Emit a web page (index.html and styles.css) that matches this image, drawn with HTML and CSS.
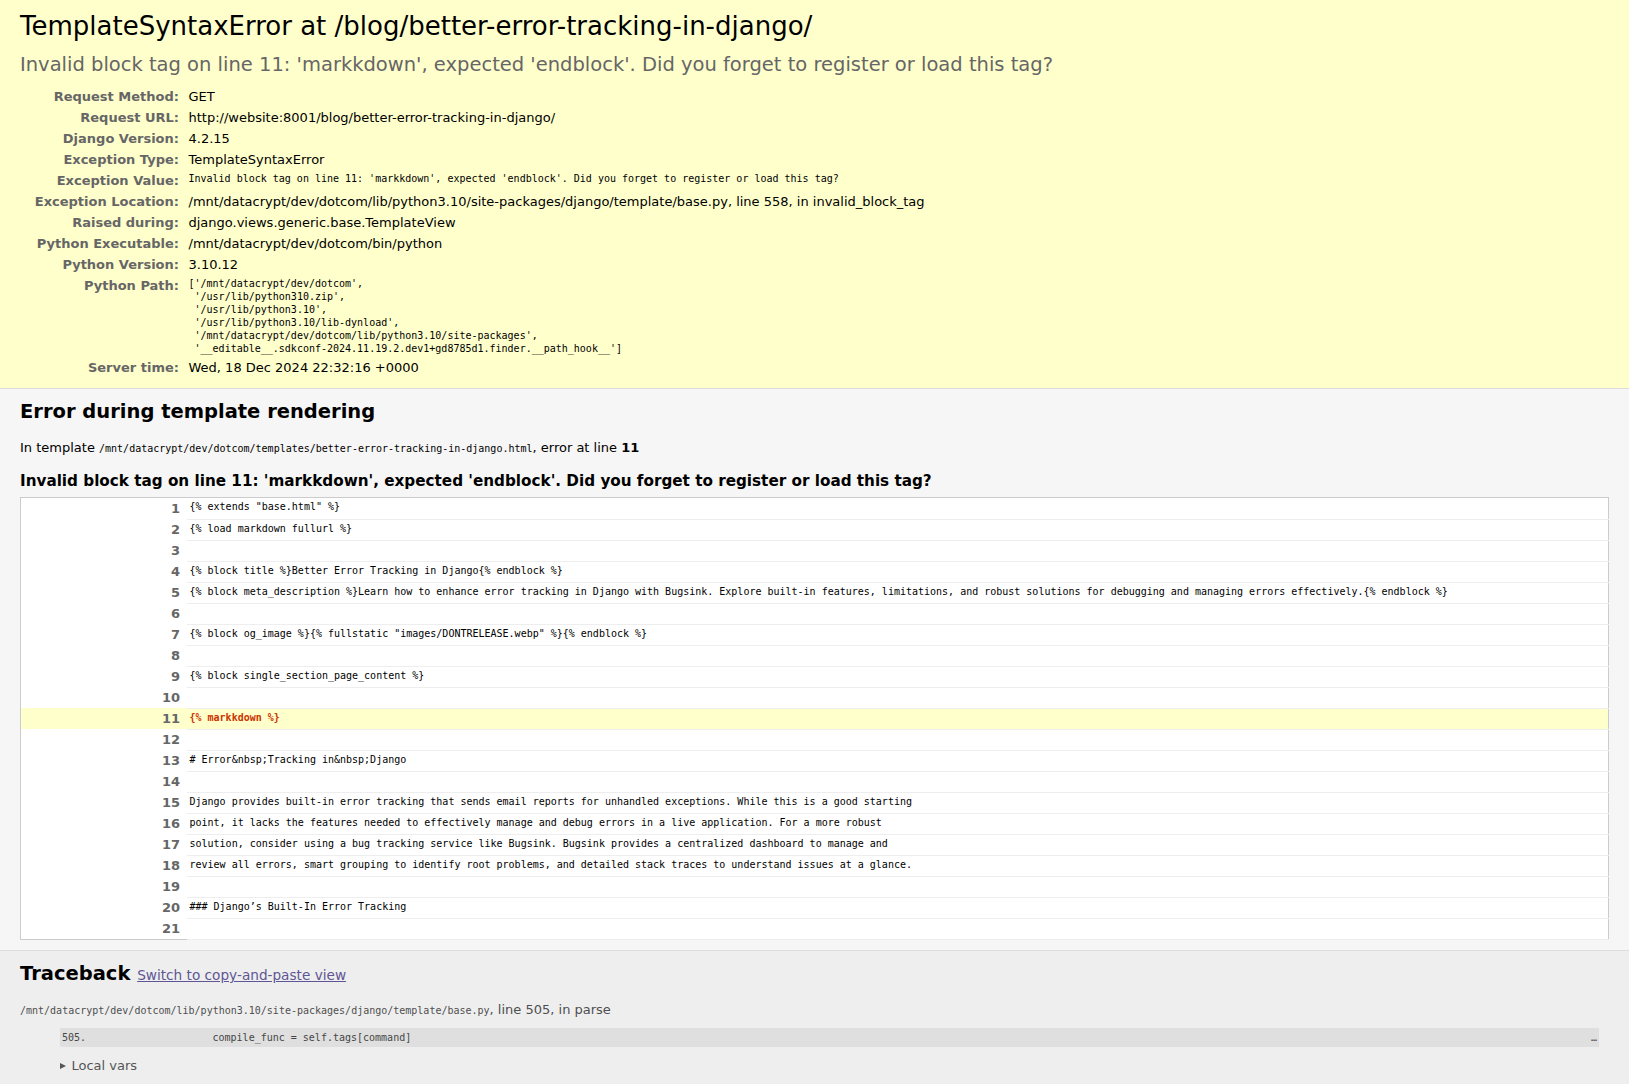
FILE: index.html
```html
<!DOCTYPE html>
<html lang="en">
<head>
<meta charset="utf-8">
<title>TemplateSyntaxError at /blog/better-error-tracking-in-django/</title>
<link rel="stylesheet" href="styles.css">
</head>
<body>
<div class="panel summary">
<h1 class="title">TemplateSyntaxError at /blog/better-error-tracking-in-django/</h1>
<pre class="exception-value">Invalid block tag on line 11: 'markkdown', expected 'endblock'. Did you forget to register or load this tag?</pre>
<table class="meta">
<tbody>
<tr><th>Request Method:</th><td>GET</td></tr>
<tr><th>Request URL:</th><td>http://website:8001/blog/better-error-tracking-in-django/</td></tr>
<tr><th>Django Version:</th><td>4.2.15</td></tr>
<tr><th>Exception Type:</th><td>TemplateSyntaxError</td></tr>
<tr><th>Exception Value:</th><td><pre class="mono">Invalid block tag on line 11: 'markkdown', expected 'endblock'. Did you forget to register or load this tag?</pre></td></tr>
<tr><th>Exception Location:</th><td><span>/mnt/datacrypt/dev/dotcom/lib/python3.10/site-packages/django/template/base.py</span>, line 558, in invalid_block_tag</td></tr>
<tr><th>Raised during:</th><td>django.views.generic.base.TemplateView</td></tr>
<tr><th>Python Executable:</th><td>/mnt/datacrypt/dev/dotcom/bin/python</td></tr>
<tr><th>Python Version:</th><td>3.10.12</td></tr>
<tr><th>Python Path:</th><td><pre class="mono">['/mnt/datacrypt/dev/dotcom',
 '/usr/lib/python310.zip',
 '/usr/lib/python3.10',
 '/usr/lib/python3.10/lib-dynload',
 '/mnt/datacrypt/dev/dotcom/lib/python3.10/site-packages',
 '__editable__.sdkconf-2024.11.19.2.dev1+gd8785d1.finder.__path_hook__']</pre></td></tr>
<tr><th>Server time:</th><td>Wed, 18 Dec 2024 22:32:16 +0000</td></tr>
</tbody>
</table>
</div>
<div class="panel template">
<h2 class="heading">Error during template rendering</h2>
<p class="template-where">In template <code class="mono">/mnt/datacrypt/dev/dotcom/templates/better-error-tracking-in-django.html</code>, error at line <strong>11</strong></p>
<h3 class="subheading">Invalid block tag on line 11: 'markkdown', expected 'endblock'. Did you forget to register or load this tag?</h3>
<table class="source">
<tbody>
<tr><th>1</th><td>{% extends "base.html" %}</td></tr>
<tr><th>2</th><td>{% load markdown fullurl %}</td></tr>
<tr><th>3</th><td></td></tr>
<tr><th>4</th><td>{% block title %}Better Error Tracking in Django{% endblock %}</td></tr>
<tr><th>5</th><td>{% block meta_description %}Learn how to enhance error tracking in Django with Bugsink. Explore built-in features, limitations, and robust solutions for debugging and managing errors effectively.{% endblock %}</td></tr>
<tr><th>6</th><td></td></tr>
<tr><th>7</th><td>{% block og_image %}{% fullstatic "images/DONTRELEASE.webp" %}{% endblock %}</td></tr>
<tr><th>8</th><td></td></tr>
<tr><th>9</th><td>{% block single_section_page_content %}</td></tr>
<tr><th>10</th><td></td></tr>
<tr class="error-line"><th>11</th><td><span class="specific">{% markkdown %}</span></td></tr>
<tr><th>12</th><td></td></tr>
<tr><th>13</th><td># Error&amp;nbsp;Tracking in&amp;nbsp;Django</td></tr>
<tr><th>14</th><td></td></tr>
<tr><th>15</th><td>Django provides built-in error tracking that sends email reports for unhandled exceptions. While this is a good starting</td></tr>
<tr><th>16</th><td>point, it lacks the features needed to effectively manage and debug errors in a live application. For a more robust</td></tr>
<tr><th>17</th><td>solution, consider using a bug tracking service like Bugsink. Bugsink provides a centralized dashboard to manage and</td></tr>
<tr><th>18</th><td>review all errors, smart grouping to identify root problems, and detailed stack traces to understand issues at a glance.</td></tr>
<tr><th>19</th><td></td></tr>
<tr><th>20</th><td>### Django’s Built-In Error Tracking</td></tr>
<tr><th>21</th><td></td></tr>
</tbody>
</table>
</div>
<div class="panel traceback">
<h2 class="heading">Traceback <span class="commands"><a href="#">Switch to copy-and-paste view</a></span></h2>
<ul class="frames">
<li class="frame">
<code class="mono">/mnt/datacrypt/dev/dotcom/lib/python3.10/site-packages/django/template/base.py</code>, line 505, in parse
<div class="context">
<ol class="context-line" start="505"><li><pre class="inline">                    compile_func = self.tags[command]</pre> <span class="dots">…</span></li></ol>
</div>
<details class="vars-toggle"><summary class="commands-summary">Local vars</summary></details>
</li>
</ul>
</div>
</body>
</html>
```
FILE: styles.css
```css
html, body, h1, h2, h3, p, pre, ul, ol, li, table, th, td, div, code, summary, details { padding: 0; margin: 0; }
body { font: 13px/17px "DejaVu Sans", sans-serif; background-color: #fff; color: #000; }
.mono { font-family: "DejaVu Sans Mono", monospace; font-size: 10px; line-height: 13px; }
pre { white-space: pre-wrap; word-break: break-word; }
.panel { padding: 10px 20px; border-bottom: 1px solid #ddd; }
.summary { background: #ffc; }
.template { background: #f6f6f6; }
.traceback { background: #eee; }
.title { font-weight: normal; font-size: 26px; line-height: 32px; }
.exception-value { font-family: "DejaVu Sans", sans-serif; font-size: 19.5px; line-height: 24px; margin: 11px 0 9px; color: #666; }
table { border: 1px solid #ccc; border-collapse: collapse; width: 100%; background: white; }
tbody td, tbody th { vertical-align: top; padding: 2px 3px; }
tbody th { width: 12em; text-align: right; color: #666; padding-right: 0.5em; }
.meta { border: none; background: transparent; }
.heading { font-size: 19.5px; line-height: 25px; margin-bottom: 15px; }
.subheading { font-size: 15.21px; line-height: 18px; margin: 15.8px 0 7.6px; }
.source td { font-family: "DejaVu Sans Mono", monospace; font-size: 10px; line-height: 13px; white-space: pre; border-bottom: 1px solid #eee; }
.error-line { background: #ffc; }
.specific { color: #cc3300; font-weight: bold; }
.commands { font-size: 13.65px; font-weight: normal; line-height: 1; }
.commands a { color: #5e5694; }
.frames { list-style-type: none; color: #222; }
.frame { padding-bottom: 13px; color: #4f4f4f; }
.context { padding: 10px 0; overflow: hidden; }
.context ol { padding-left: 30px; margin: 0 10px; list-style-position: inside; }
.context li { font-family: "DejaVu Sans Mono", monospace; font-size: 10px; line-height: 13px; white-space: pre; color: #777; padding-left: 2px; }
.context-line li { color: #464646; background-color: #dfdfdf; padding: 3px 2px; }
.inline { display: inline; }
.dots { position: absolute; right: 32px; }
.commands-summary { margin-left: 40px; color: #555; cursor: pointer; display: block; list-style: none; }
.commands-summary::-webkit-details-marker { display: none; }
.commands-summary::before { content: ""; display: inline-block; border-style: solid; border-width: 3.5px 0 3.5px 6px; border-color: transparent transparent transparent #555; margin-right: 5.5px; vertical-align: 1px; }
```
